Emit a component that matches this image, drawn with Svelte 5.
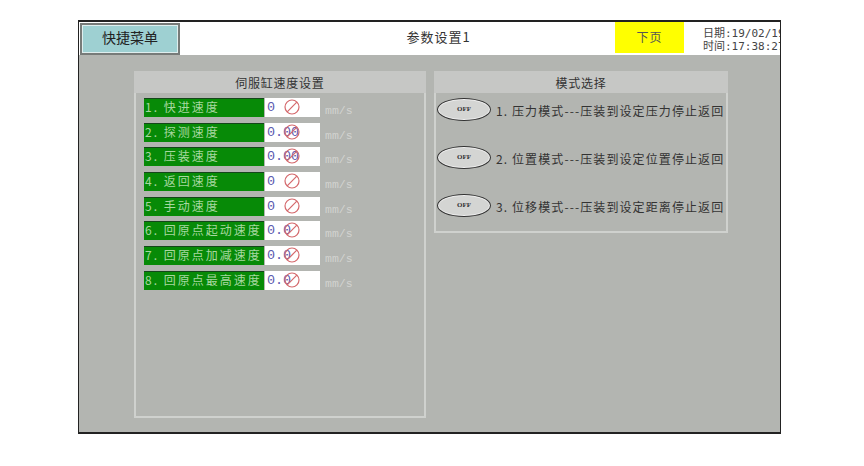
<script>
    const speeds = [
        { label: '1. 快进速度', value: '0' },
        { label: '2. 探测速度', value: '0.00' },
        { label: '3. 压装速度', value: '0.00' },
        { label: '4. 返回速度', value: '0' },
        { label: '5. 手动速度', value: '0' },
        { label: '6. 回原点起动速度', value: '0.0' },
        { label: '7. 回原点加减速度', value: '0.0' },
        { label: '8. 回原点最高速度', value: '0.0' }
    ]
    const modes = [
        '1. 压力模式---压装到设定压力停止返回',
        '2. 位置模式---压装到设定位置停止返回',
        '3. 位移模式---压装到设定距离停止返回'
    ]
</script>

<main>
    <div class="screen">
        <div class="topbar">
            <button class="menu">快捷菜单</button>
            <div class="title">参数设置1</div>
            <button class="next">下页</button>
            <div class="clock">
                <span>日期:19/02/19</span>
                <span>时间:17:38:27</span>
            </div>
        </div>
        <div class="content">
            <section class="panel left">
                <h2>伺服缸速度设置</h2>
                <div class="rows">
                    {#each speeds as row}
                        <div class="row">
                            <span class="label">{row.label}</span>
                            <span class="field">
                                <span class="value">{row.value}</span>
                                <svg class="nosign" viewBox="0 0 16 16" width="16" height="16">
                                    <circle cx="8" cy="8" r="7" fill="none" stroke="#d4686c" stroke-width="1.2" />
                                    <path d="M3.2 12.8 12.8 3.2" stroke="#d4686c" stroke-width="1.2" />
                                </svg>
                            </span>
                            <span class="unit">mm/s</span>
                        </div>
                    {/each}
                </div>
            </section>
            <section class="panel right">
                <h2>模式选择</h2>
                <div class="modes">
                    {#each modes as mode}
                        <div class="mode">
                            <span class="off">OFF</span>
                            <span class="mode-text">{mode}</span>
                        </div>
                    {/each}
                </div>
            </section>
        </div>
    </div>
</main>

<style>
    :global(body) {
        background: #fff;
    }
    main {
        width: 864px;
        height: 466px;
        padding: 20px 83px 32px 78px;
        box-sizing: border-box;
        font-family: "Noto Sans CJK SC", "Liberation Sans", sans-serif;
    }
    .screen {
        width: 100%;
        height: 100%;
        box-sizing: border-box;
        border: 1px solid #222;
        border-top-width: 2px;
        border-bottom-width: 2px;
        background: #b3b5b1;
        display: flex;
        flex-direction: column;
        overflow: hidden;
    }
    .topbar {
        height: 33px;
        flex: none;
        background: #fff;
        display: flex;
        align-items: stretch;
    }
    .menu {
        width: 100px;
        margin: 1px 0 0 1px;
        padding: 0 0 4px;
        box-sizing: border-box;
        border: 2px solid #777b79;
        background: #9ed0d2;
        box-shadow: inset 0 0 0 1px #dfeeee;
        color: #222;
        font: 14px "Noto Sans CJK SC", sans-serif;
    }
    .title {
        flex: 1;
        text-align: center;
        line-height: 29px;
        font-size: 13px;
        letter-spacing: 1px;
        color: #333;
        padding-left: 82px;
    }
    .next {
        width: 69px;
        margin: 0 0 2px;
        padding: 0 0 2px;
        border: none;
        background: #ffff00;
        color: #555;
        font: 12px "Noto Sans CJK SC", sans-serif;
        letter-spacing: 1px;
    }
    .clock {
        width: 77px;
        margin-left: 19px;
        padding-top: 5px;
        display: flex;
        flex-direction: column;
        font: 11px/13px "DejaVu Sans Mono", "Noto Sans CJK SC", monospace;
        color: #444;
        white-space: nowrap;
        overflow: hidden;
    }
    .content {
        flex: 1;
        display: flex;
        align-items: flex-start;
        gap: 8px;
        padding: 16px 0 0 55px;
    }
    .panel {
        box-sizing: border-box;
        border: 2px solid #cfd1ce;
        border-top: none;
    }
    .panel h2 {
        margin: 0 -2px;
        height: 22px;
        background: #c6c7c5;
        font-size: 12px;
        font-weight: 400;
        letter-spacing: 0.75px;
        line-height: 23px;
        text-align: center;
        color: #333;
    }
    .left {
        width: 292px;
        height: 347px;
    }
    .right {
        width: 294px;
        height: 162px;
    }
    .rows {
        display: flex;
        flex-direction: column;
        gap: 5.7px;
        padding: 5px 0 0 8px;
    }
    .row {
        display: flex;
        align-items: center;
        height: 19px;
    }
    .label {
        width: 120px;
        height: 19px;
        box-sizing: border-box;
        border-top: 1px solid #14471a;
        background: #078a07;
        color: #a8d8a0;
        font-size: 12px;
        line-height: 16px;
        letter-spacing: 2px;
        padding-left: 1px;
        white-space: nowrap;
        overflow: hidden;
    }
    .field {
        position: relative;
        width: 55px;
        height: 19px;
        margin-left: 1px;
        background: #fff;
        color: #5a5ab0;
        font: 13.4px/20px "Liberation Mono", monospace;
        padding-left: 2px;
        box-sizing: border-box;
    }
    .nosign {
        position: absolute;
        left: 19px;
        top: 1px;
    }
    .unit {
        margin-left: 5px;
        padding-top: 6px;
        color: #d2d3d0;
        font: 11.5px "Liberation Mono", monospace;
    }
    .modes {
        display: flex;
        flex-direction: column;
        gap: 24.2px;
        padding: 4px 0 0 1px;
    }
    .mode {
        display: flex;
        align-items: center;
        height: 24px;
    }
    .off {
        width: 54px;
        height: 23px;
        flex: none;
        box-sizing: border-box;
        border: 1px solid #333;
        border-radius: 50%;
        background: #d4d5d3;
        box-shadow: inset 0 0 0 1px #eee;
        text-align: center;
        font: 700 7px/21px "Liberation Serif", serif;
        color: #333;
    }
    .mode-text {
        margin-left: 5px;
        padding-top: 3px;
        font-size: 12px;
        color: #333;
        white-space: nowrap;
        letter-spacing: 1.1px;
    }
</style>
